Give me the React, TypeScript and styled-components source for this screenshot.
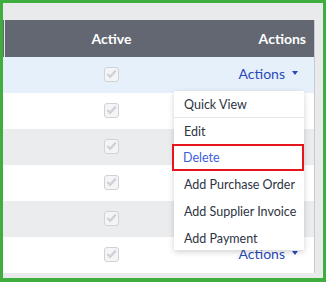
import React from 'react';
import styled, { createGlobalStyle } from 'styled-components';

const GlobalStyle = createGlobalStyle`
  html, body {
    margin: 0;
    padding: 0;
    background: #ffffff;
  }
  body {
    font-family: Lato, "Open Sans", sans-serif;
  }
`;

const Frame = styled.div`
  width: 326px;
  height: 282px;
  box-sizing: border-box;
  border: 3px solid #3fae3f;
  border-bottom-width: 4px;
  background: #e9eaec;
  padding: 17px 8px 5px 0;
  overflow: hidden;
`;

const Table = styled.div`
  border-right: 1px solid #c9cbcf;
  display: grid;
  grid-template-columns: 2px 213px 1fr;
`;

const HeadCell = styled.div<{ $align: 'left' | 'center' | 'right' }>`
  height: 37px;
  background: #636772;
  color: #ffffff;
  font-weight: 700;
  font-size: 14px;
  display: flex;
  align-items: center;
  justify-content: ${(p) =>
    p.$align === 'center' ? 'center' : p.$align === 'right' ? 'flex-end' : 'flex-start'};
  padding-right: ${(p) => (p.$align === 'right' ? '8px' : '0')};
`;

const EdgeHead = styled(HeadCell)`
  border-right: 1px solid #e4e6ea;
`;

const Cell = styled.div<{ $bg: string }>`
  height: 36px;
  box-sizing: border-box;
  background: ${(p) => p.$bg};
  display: flex;
  align-items: center;
  position: relative;
`;

const CheckCell = styled(Cell)`
  justify-content: center;
  padding-bottom: 2px;
`;

const ActionCell = styled(Cell)`
  justify-content: flex-end;
  padding-right: 16px;
  padding-bottom: 4px;
`;

const Check = styled.span`
  width: 15px;
  height: 15px;
  box-sizing: border-box;
  border: 1px solid #d0d2d5;
  border-radius: 3px;
  background: #f4f5f6;
  display: flex;
  align-items: center;
  justify-content: center;
`;

const ActionsLink = styled.span`
  color: #2b4ab8;
  font-size: 14px;
  display: flex;
  align-items: center;
  gap: 7px;
`;

const Caret = styled.span`
  width: 0;
  height: 0;
  border-left: 3px solid transparent;
  border-right: 3px solid transparent;
  border-top: 4px solid #2b4ab8;
`;

const Menu = styled.div`
  position: absolute;
  top: 34px;
  right: 10px;
  width: 130px;
  background: #ffffff;
  box-shadow: 0 2px 6px rgba(0, 0, 0, 0.18);
  z-index: 5;
`;

const MenuItem = styled.div<{ $active?: boolean; $divider?: boolean }>`
  height: ${(p) => (p.$active ? '25px' : '27px')};
  display: flex;
  align-items: center;
  padding-left: 10px;
  font-size: 12.5px;
  color: ${(p) => (p.$active ? '#3a5fdc' : '#2e3442')};
  border-bottom: ${(p) => (p.$divider ? '1px solid #e3e5e8' : 'none')};
  box-sizing: border-box;
  outline: ${(p) => (p.$active ? '2px solid #e8141b' : 'none')};
  outline-offset: -1px;
  margin: ${(p) => (p.$active ? '0 1px 1px -1px' : '0')};

  &:last-child {
    height: 25px;
    padding-top: 1px;
  }
`;

const rows = ['#e6f0fb', '#ffffff', '#ebecee', '#ffffff', '#ebecee', '#ffffff'];

const CheckIcon = () => (
  <svg width="11" height="10" viewBox="0 0 11 10">
    <path d="M1.3 5 L4.2 7.8 L9.8 1.6" fill="none" stroke="#d0d2d5" strokeWidth="2.4" />
  </svg>
);

const menuItems = [
  'Quick View',
  'Edit',
  'Delete',
  'Add Purchase Order',
  'Add Supplier Invoice',
  'Add Payment',
];

const App: React.FC = () => (
  <>
    <GlobalStyle />
    <Frame>
      <Table>
        <EdgeHead $align="left" />
        <HeadCell $align="center">Active</HeadCell>
        <HeadCell $align="right">Actions</HeadCell>
        {rows.map((bg, i) => (
          <React.Fragment key={i}>
            <Cell $bg={bg} />
            <CheckCell $bg={bg}>
              <Check>
                <CheckIcon />
              </Check>
            </CheckCell>
            <ActionCell $bg={bg}>
              {(i === 0 || i === 5) && (
                <ActionsLink>
                  Actions <Caret />
                </ActionsLink>
              )}
              {i === 0 && (
                <Menu>
                  {menuItems.map((m, j) => (
                    <MenuItem key={m} $divider={j === 0} $active={m === 'Delete'}>
                      {m}
                    </MenuItem>
                  ))}
                </Menu>
              )}
            </ActionCell>
          </React.Fragment>
        ))}
      </Table>
    </Frame>
  </>
);

export default App;
